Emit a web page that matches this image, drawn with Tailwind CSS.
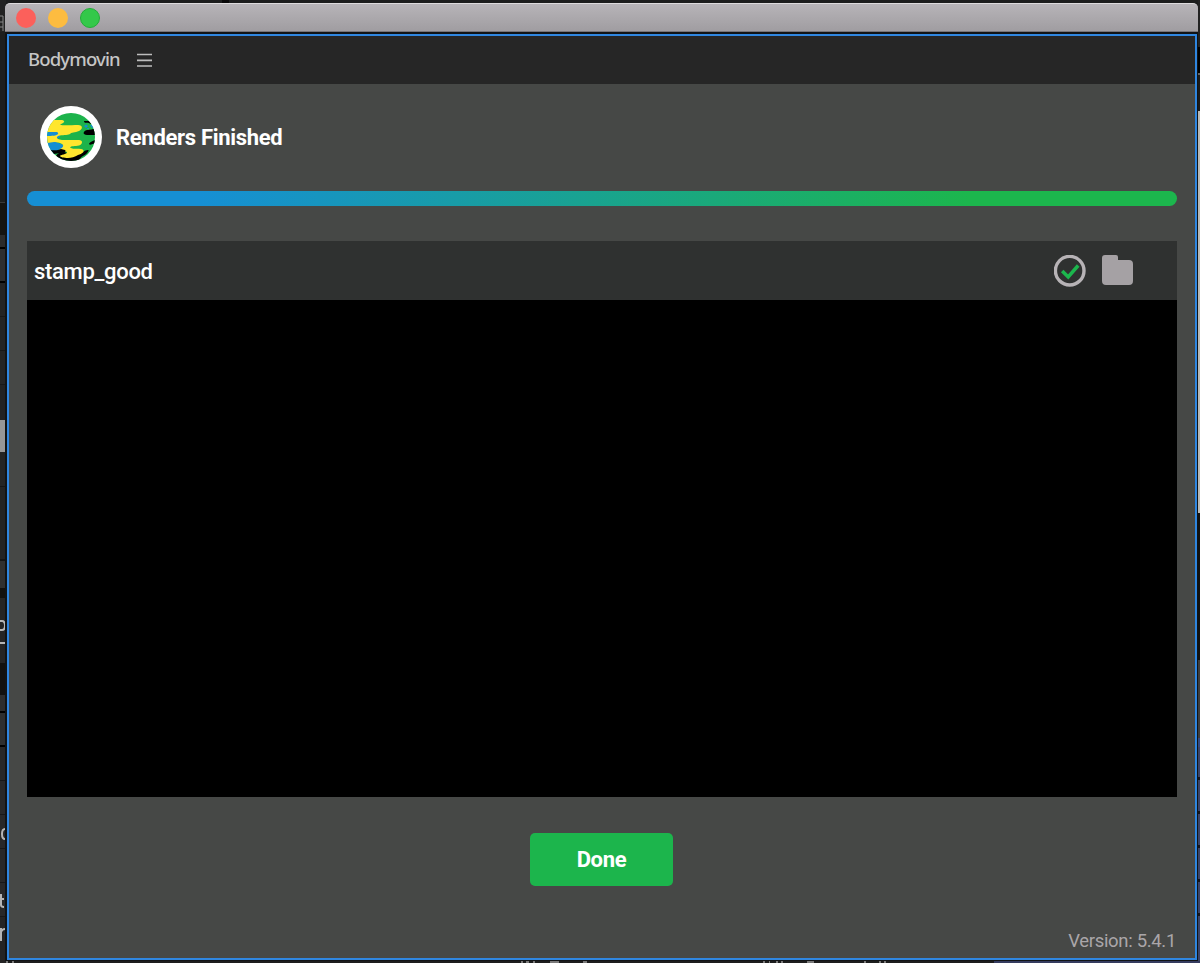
<!DOCTYPE html>
<html lang="en">
<head>
<meta charset="utf-8">
<title>Bodymovin</title>
<script src="https://cdn.jsdelivr.net/npm/@tailwindcss/browser@4"></script>
</head>
<body class="relative h-[963px] w-[1200px] overflow-hidden bg-[#1c1d1d] p-0 font-['Roboto',sans-serif]">
<!-- application panels peeking out behind the window -->
<div class="absolute left-0 top-0 flex h-[963px] w-[6px] flex-col overflow-hidden text-[#aaa]">
  <div class="h-[32px] shrink-0 bg-[#222]"></div>
  <div class="h-[171px] shrink-0 border-b border-[#3a3a3a] bg-[#1d1e1e]"></div>
  <div class="h-[32px] shrink-0 bg-[#151411]"></div>
  <div class="h-[14px] shrink-0 border-b-2 border-black bg-[#2b2b2b]"></div>
  <div class="h-[34px] shrink-0 border-b-2 border-black bg-[#2e2f2f]"></div>
  <div class="h-[34px] shrink-0 border-b border-[#181818] bg-[#242424]"></div>
  <div class="h-[34px] shrink-0 border-b border-[#181818] bg-[#242424]"></div>
  <div class="h-[34px] shrink-0 border-b border-[#181818] bg-[#242424]"></div>
  <div class="h-[35px] shrink-0 bg-[#222]"></div>
  <div class="h-[32px] shrink-0 bg-[#979797]"></div>
  <div class="h-[35px] shrink-0 border-b border-[#151515] bg-[#242424]"></div>
  <div class="h-[74px] shrink-0 border-b-2 border-[#151515] bg-[#232323]"></div>
  <div class="h-[27px] shrink-0 bg-[#303030]"></div>
  <div class="h-[10px] shrink-0 bg-[#12110f]"></div>
  <div class="h-[65px] shrink-0 bg-[#252525]"></div>
  <div class="h-[32px] shrink-0 bg-[#12110f]"></div>
  <div class="h-[18px] shrink-0 border-b-2 border-black bg-[#2d2d2d]"></div>
  <div class="h-[34px] shrink-0 border-b-2 border-black bg-[#2e2f2f]"></div>
  <div class="h-[34px] shrink-0 border-b border-[#181818] bg-[#282828]"></div>
  <div class="h-[34px] shrink-0 border-b border-[#181818] bg-[#282828]"></div>
  <div class="h-[34px] shrink-0 border-b border-[#181818] bg-[#282828]"></div>
  <div class="h-[34px] shrink-0 border-b border-[#181818] bg-[#282828]"></div>
  <div class="h-[34px] shrink-0 border-b border-[#181818] bg-[#282828]"></div>
  <div class="grow bg-[#242424]"></div>
</div>
<svg class="absolute left-0 top-0" width="6" height="963" fill="none" stroke="#b5b5b5" stroke-width="2">
  <path d="M0 16h3v15M0 22h3M0 27h3" stroke="#888" stroke-width="1"/>
  <path d="M0 621h2q3 0 3 4.500t-3 4.500H0M0 643h5M5 829q-3 0-3 5t3 5M1 894v11q0 2 3 2M0 899h4M1 928v13M1 932q1-3 4-3"/>
</svg>
<div class="absolute right-0 top-0 flex h-[963px] w-[2px] flex-col">
  <div class="h-[47px] shrink-0 bg-[#222]"></div>
  <div class="h-[26px] shrink-0 bg-black"></div>
  <div class="h-[2px] shrink-0 bg-[#666]"></div>
  <div class="h-[36px] shrink-0 bg-[#1b1b1b]"></div>
  <div class="h-[402px] shrink-0 bg-[#b9b8b3]"></div>
  <div class="h-[147px] shrink-0 bg-[#121212]"></div>
  <div class="h-[78px] shrink-0 bg-[#3e3e3e]"></div>
  <div class="h-[9px] shrink-0 bg-[#354a80]"></div>
  <div class="h-[33px] shrink-0 border-b-3 border-[#14151c] bg-[#3b4468]"></div>
  <div class="h-[34px] shrink-0 border-b-3 border-[#14151c] bg-[#3b4468]"></div>
  <div class="h-[34px] shrink-0 border-b-3 border-[#14151c] bg-[#3b4468]"></div>
  <div class="h-[34px] shrink-0 border-b-3 border-[#14151c] bg-[#3b4468]"></div>
  <div class="h-[34px] shrink-0 border-b-3 border-[#14151c] bg-[#3b4468]"></div>
  <div class="grow bg-[#3b4468]"></div>
</div>
<div class="absolute left-[222px] top-0 h-[3px] w-[7px] bg-[#080808]"></div>
<div class="absolute bottom-0 left-[994px] h-[2px] w-[206px] bg-[#343b5f]"></div>
<svg class="absolute bottom-0 left-0" width="1000" height="2" stroke="#999" stroke-width="1.500">
  <path d="M6 1h2M12 1h2M521 1h2M526 1h3M533 1h2M550 1h9M583 1h4M763 1h2M769 1h1M776 1h2M781 1h2M807 1h7M864 1h2M879 1h2M884 1h2"/>
</svg>

<div class="absolute left-[5px] top-[3px] flex h-[958px] w-[1193px] flex-col rounded-t-[5px] bg-[#111315]">
  <header class="flex h-[29px] shrink-0 items-center gap-3 rounded-t-[5px] border-b border-[#777478] border-t border-t-[#dddbdd] bg-linear-to-b from-[#b7b4b8] to-[#a09da1] pl-[11px]">
    <span class="size-5 rounded-full bg-[#fc605b]"></span>
    <span class="size-5 rounded-full bg-[#fdbc40]"></span>
    <span class="size-5 rounded-full border border-[#23ad38] bg-[#34c84a]"></span>
  </header>
  <div class="ml-[2px] mr-px mt-[2px] flex h-[926px] flex-col border-2 border-[#2f86e0] bg-[#464846]">
    <div class="flex h-12 shrink-0 items-center bg-[#262626] pl-[19px]">
      <span class="w-[109px] whitespace-nowrap pb-[3px] font-['Noto_Sans',sans-serif] text-[18.500px] font-medium tracking-[-0.85px] text-[#c6c6c6]">Bodymovin</span>
      <svg class="mb-px" width="15" height="14" stroke="#bdbdbd" stroke-width="1.700"><path d="M0 1.500h15M0 7.300h15M0 13h15"/></svg>
    </div>
    <main class="flex grow flex-col pl-[18px] pr-[18px]">
      <div class="flex h-[107px] items-center gap-[14px] pb-px pl-[13px]">
        <svg class="size-[62px]" viewBox="0 0 62 62">
          <defs><clipPath id="globe"><circle cx="31" cy="31" r="24"/></clipPath></defs>
          <circle cx="31" cy="31" r="31" fill="#fff"/>
          <g clip-path="url(#globe)">
            <path fill="#1cb34b" d="M6 6h50v50H6z"/>
            <path fill="#158ed2" d="M6 27c5-2 9-2 14-1v5l-6 4c8 4 10 3 10 6l-8 5-4 4H6z"/>
            <path fill="#000" d="M16 50c2-4 8-5 11-3 1 3 8 2 12 1s5-4 9-4c2 0-2 5-5 6s-5 8-12 8c-8 0-12-3-15-8z"/>
            <path fill="#ffe62e" d="M6 14h16c4 1 2 3-2 4.500 3 1.500 11 .5 18 .5 5 0 5 4 1 6-4 2-8 1-9 3-1 1-6 1-10 1.500-4 .5-5 4 2 4.500h17c4 0 4 4 0 5.500-4 1-8 0-9 2 3 2 7 1 11 1.500 5 1 2 5-3 6-3 2-7 3-10 3-4 0-8-1-8-2 0-1 8-2 7-4-2-1-6 0-9 0 0-3 6-4 5-7-1-2-6-3-9-3l-8 1v-7c4 0 11 0 12-2 1-2-2-2-5-2H6z"/>
            <path fill="#000" d="M10 44c3 0 7 1 11-1l4 1c2 2-2 3-5 3l-6 1zM44 15h11v3h-4c-3-2-7 0-7-3zm13 8v6H47c-5 0-4-4 0-5 5 0 3-1 10-1zm0 10v4c-3 0-7 3-8 1 0-2 4-3 8-5z"/>
            <path fill="#158ed2" d="M44 20l2-1.500 2 1.500-2 2zM50 19h3l2 2-3 1zM47 22h2v1h-2z"/>
          </g>
        </svg>
        <h1 class="whitespace-nowrap text-[22px] font-bold tracking-[-0.31px] text-white">Renders Finished</h1>
      </div>
      <div class="h-[15px] shrink-0 rounded-full bg-linear-to-r/srgb from-[#168fd4] from-15% to-[#1cb64d] to-82%"></div>
      <section class="mt-[35px] flex h-[556px] shrink-0 flex-col bg-black">
        <div class="flex h-[59px] shrink-0 items-center bg-[#2f3130] pl-[7px] pr-11">
          <span class="grow pt-px text-[22px] font-medium tracking-[-0.3px] text-white">stamp_good</span>
          <svg class="mr-4 size-8" viewBox="0 0 32 32" fill="none"><circle cx="15.700" cy="15.700" r="14.300" stroke="#b7b3b6" stroke-width="3.400"/><path d="M8.200 16l6 6L24.200 10.500" stroke="#1cb64d" stroke-width="3.500"/></svg>
          <svg class="mb-px h-[30px] w-[31px]" viewBox="0 0 31 30"><path fill="#a5a1a4" d="M3 0h11q2 0 2 2v3h11q4 0 4 4v17q0 4-4 4H4q-4 0-4-4V3q0-3 3-3z"/></svg>
        </div>
      </section>
      <button class="mr-px mt-9 h-[53px] w-[143px] shrink-0 self-center rounded-[5px] bg-[#1cb54c] pb-px text-[22px] font-bold tracking-[-0.3px] text-white">Done</button>
      <footer class="mt-auto flex h-[33px] items-center justify-end whitespace-nowrap pr-px text-[18.500px] tracking-[-0.32px] text-[#aaa6a9]">Version: 5.4.1</footer>
    </main>
  </div>
</div>
</body>
</html>
